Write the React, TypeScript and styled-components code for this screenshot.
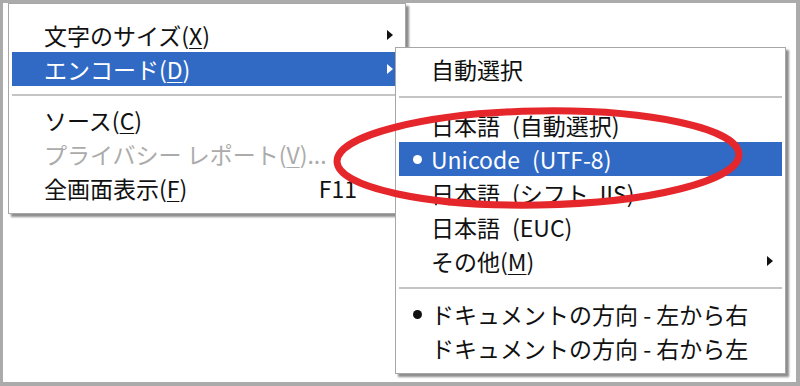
import styled, { createGlobalStyle } from "styled-components";

const GlobalStyle = createGlobalStyle`
  html, body {
    margin: 0;
    padding: 0;
    background: #ffffff;
  }
  body {
    font-family: "Noto Sans CJK JP", "Liberation Sans", sans-serif;
  }
`;

const Page = styled.div`
  position: relative;
  width: 800px;
  height: 386px;
  overflow: hidden;
`;

const Backdrop = styled.div`
  width: 100%;
  height: 100%;
  box-sizing: border-box;
  background: #ffffff;
  border-style: solid;
  border-color: #ababab;
  border-width: 3px 4px 4px 3px;
`;

const Menu = styled.div<{ $left: number; $top: number; $width: number; $pad: number }>`
  position: absolute;
  left: ${(p) => p.$left}px;
  top: ${(p) => p.$top}px;
  width: ${(p) => p.$width}px;
  box-sizing: border-box;
  background: #ffffff;
  border: 1px solid #a7a7a7;
  box-shadow: 3px 3px 2px rgba(0, 0, 0, 0.45);
  padding: ${(p) => p.$pad}px 3px 8px 3px;
  display: flex;
  flex-direction: column;
`;

const Item = styled.div<{ $active?: boolean; $disabled?: boolean }>`
  display: grid;
  grid-template-columns: 32px 1fr auto 24px;
  align-items: center;
  height: 34px;
  font-size: 23px;
  line-height: 34px;
  white-space: nowrap;
  background: ${(p) => (p.$active ? "#316ac5" : "transparent")};
  color: ${(p) => (p.$active ? "#ffffff" : p.$disabled ? "#ababab" : "#111111")};
`;

const Check = styled.span`
  display: flex;
  justify-content: center;
  align-items: center;
  padding-left: 4px;
`;

const Bullet = styled.span`
  width: 9px;
  height: 9px;
  border-radius: 50%;
  background: currentColor;
`;

const Label = styled.span`
  u {
    text-underline-offset: 3px;
    text-decoration-thickness: 1px;
  }
`;

const Gap = styled.span`
  display: inline-block;
  width: 12px;
`;

const Shortcut = styled.span`
  padding-right: 21px;
`;

const ArrowCell = styled.span`
  display: flex;
  justify-content: center;
  align-items: center;
`;

const Arrow = styled.span`
  width: 0;
  height: 0;
  border-left: 6px solid currentColor;
  border-top: 5px solid transparent;
  border-bottom: 5px solid transparent;
`;

const Separator = styled.div<{ $h: number }>`
  height: ${(p) => p.$h}px;
  display: flex;
  align-items: center;
  &::after {
    content: "";
    flex: 1;
    height: 2px;
    background: #c4c4c4;
  }
`;

const Overlay = styled.svg`
  position: absolute;
  left: 0;
  top: 0;
  pointer-events: none;
`;

type Entry =
  | { sep: number }
  | {
      sep?: undefined;
      label: string;
      note?: string;
      key?: string;
      tail?: string;
      shortcut?: string;
      sub?: boolean;
      active?: boolean;
      disabled?: boolean;
      bullet?: boolean;
    };

const mainItems: Entry[] = [
  { label: "文字のサイズ(", key: "X", tail: ")", sub: true },
  { label: "エンコード(", key: "D", tail: ")", sub: true, active: true },
  { sep: 17 },
  { label: "ソース(", key: "C", tail: ")" },
  { label: "プライバシー レポート(", key: "V", tail: ")...", disabled: true },
  { label: "全画面表示(", key: "F", tail: ")", shortcut: "F11" },
];

const encodingItems: Entry[] = [
  { label: "自動選択" },
  { sep: 22 },
  { label: "日本語", note: "(自動選択)" },
  { label: "Unicode", note: "(UTF-8)", active: true, bullet: true },
  { label: "日本語", note: "(シフト JIS)" },
  { label: "日本語", note: "(EUC)" },
  { label: "その他(", key: "M", tail: ")", sub: true },
  { sep: 19 },
  { label: "ドキュメントの方向 - 左から右", bullet: true },
  { label: "ドキュメントの方向 - 右から左" },
];

function MenuList({ items }: { items: Entry[] }) {
  return (
    <>
      {items.map((it, i) => {
        if (it.sep !== undefined) return <Separator key={i} $h={it.sep} />;
        return (
          <Item key={i} $active={it.active} $disabled={it.disabled}>
            <Check>{it.bullet && <Bullet />}</Check>
            <Label>
              {it.label}
              {it.note && (
                <>
                  <Gap />
                  {it.note}
                </>
              )}
              {it.key && <u>{it.key}</u>}
              {it.tail}
            </Label>
            <Shortcut>{it.shortcut}</Shortcut>
            <ArrowCell>{it.sub && <Arrow />}</ArrowCell>
          </Item>
        );
      })}
    </>
  );
}

export default function App() {
  return (
    <>
      <GlobalStyle />
      <Page>
        <Backdrop />
        <Menu $left={8} $top={3} $width={398} $pad={14}>
          <MenuList items={mainItems} />
        </Menu>
        <Menu $left={395} $top={47} $width={391} $pad={4}>
          <MenuList items={encodingItems} />
        </Menu>
        <Overlay width={800} height={386} viewBox="0 0 800 386">
          <ellipse
            cx={538}
            cy={158}
            rx={201}
            ry={47}
            fill="none"
            stroke="#e5262b"
            strokeWidth={7}
            transform="rotate(-1 538 158)"
          />
        </Overlay>
      </Page>
    </>
  );
}
